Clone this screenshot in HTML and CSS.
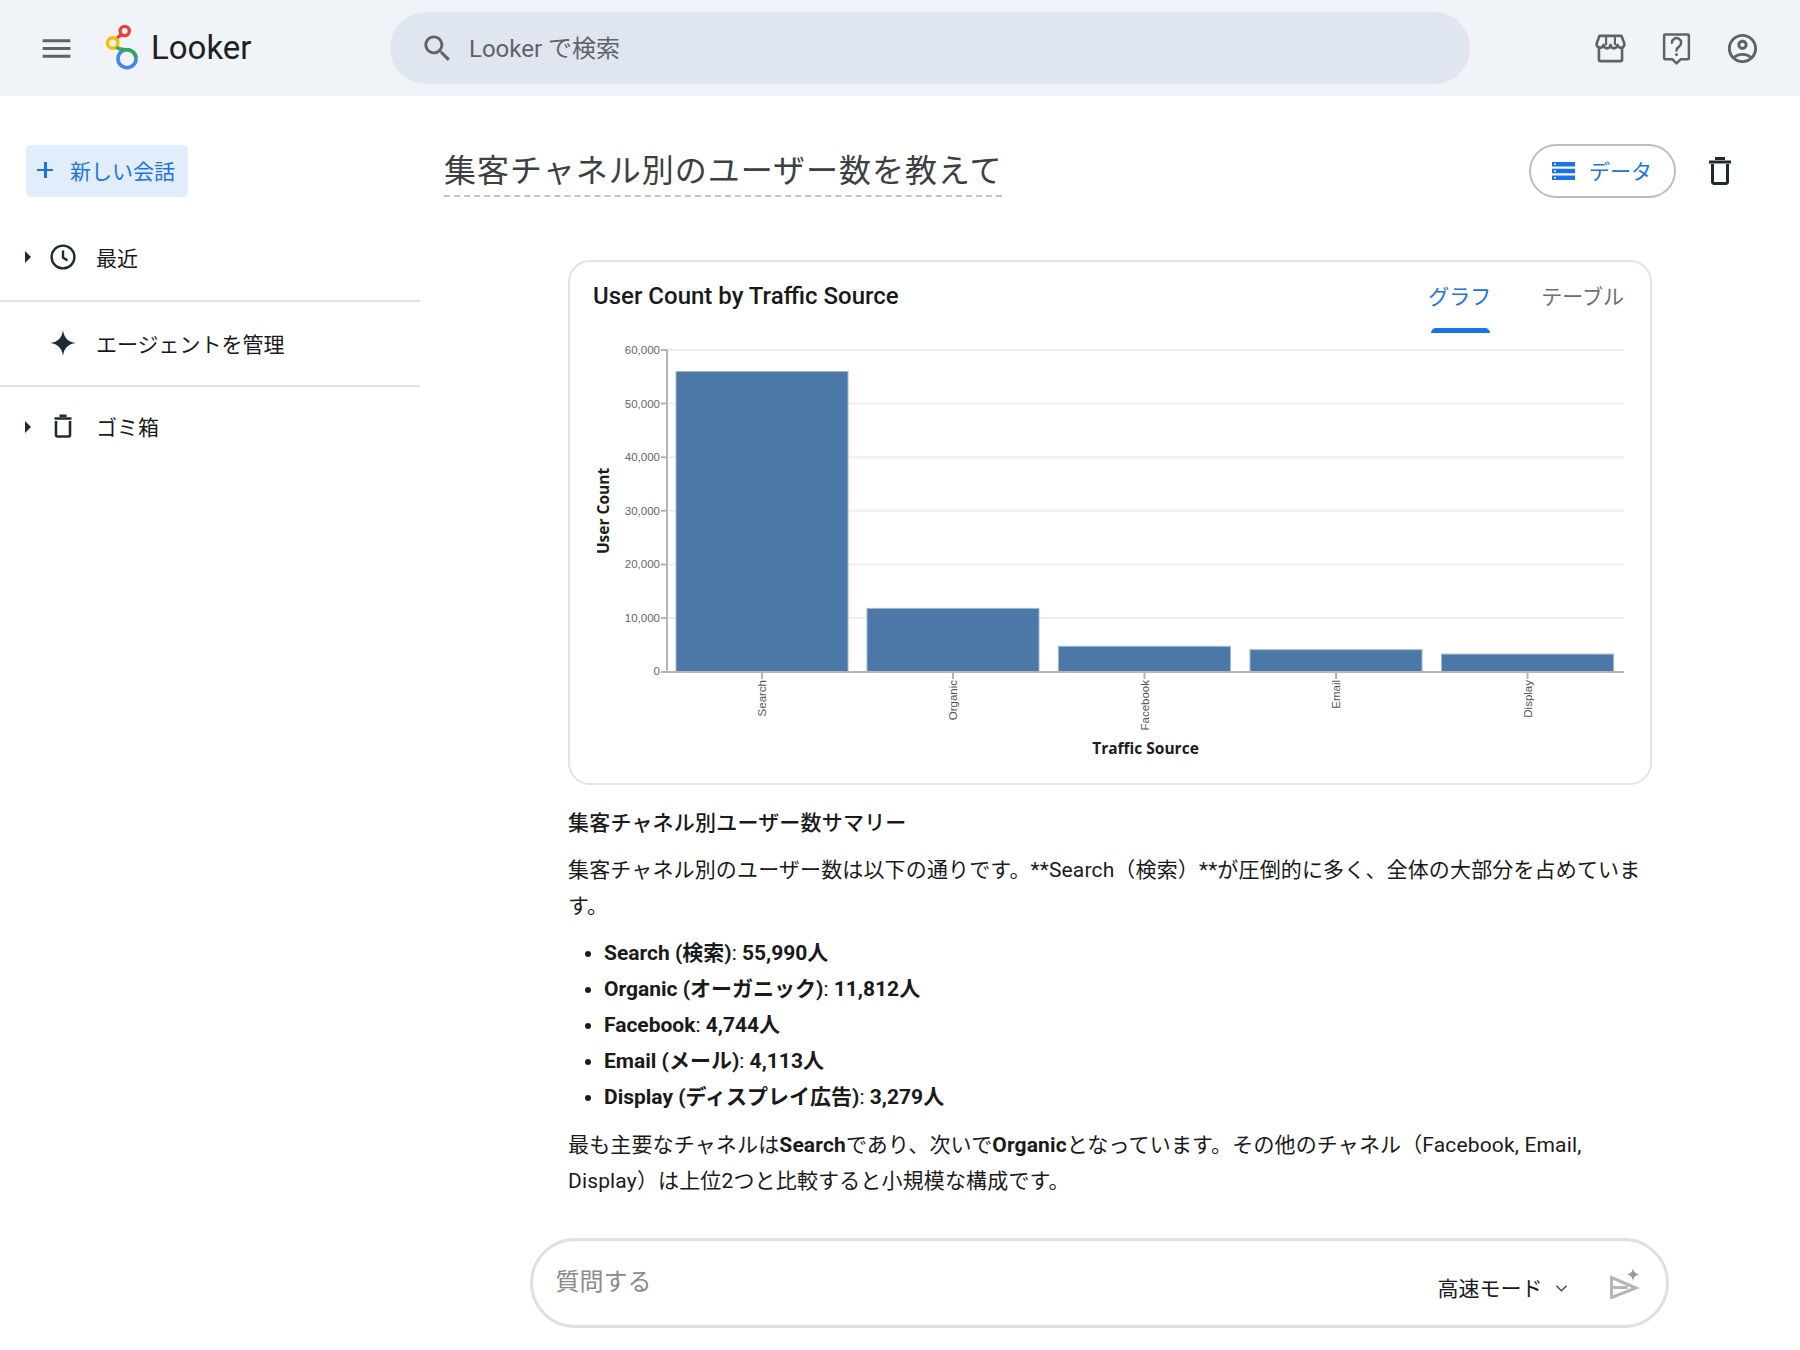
FILE: index.html
```html
<!DOCTYPE html>
<html lang="ja">
<head>
    <title>Looker</title>
    <meta charset="UTF-8">
    <link rel="stylesheet" href="styles.css">
</head>
<body>
    <header class="header">
        <svg class="menu-icon" viewBox="0 0 24 24"><path d="M3 18h18v-2H3v2zm0-5h18v-2H3v2zm0-7v2h18V6H3z"/></svg>
        <div class="logo">
            <svg class="logo-mark" viewBox="0 0 40 52" fill="none">
                <path d="M17.500 12.500 12.500 16.500" stroke="#ea4335" stroke-width="3.400"/>
                <circle cx="20.700" cy="9" r="4.600" stroke="#ea4335" stroke-width="3.400"/>
                <circle cx="8.700" cy="21" r="5.200" stroke="#fbbc04" stroke-width="3.400"/>
                <circle cx="23" cy="36.700" r="9" stroke="#4285f4" stroke-width="3.600"/>
                <path d="M12.500 25 Q15 27.700 23 27.700 A9 9 0 0 1 32 35.500" stroke="#34a853" stroke-width="3.600"/>
            </svg>
            <span class="logo-text">Looker</span>
        </div>
        <div class="search">
            <svg class="search-icon" viewBox="0 0 24 24"><path d="M15.500 14h-.790l-.280-.270C15.410 12.590 16 11.110 16 9.500 16 5.910 13.090 3 9.500 3S3 5.910 3 9.500 5.910 16 9.500 16c1.610 0 3.090-.590 4.230-1.570l.270.280v.790l5 4.990L20.490 19l-4.990-5zm-6 0C7.010 14 5 11.990 5 9.500S7.010 5 9.500 5 14 7.010 14 9.500 11.990 14 9.500 14z"/></svg>
            <span class="search-text">Looker で検索</span>
        </div>
        <div class="header-icons">
            <svg class="head-icon" viewBox="0 0 30 30" fill="none" stroke="#5f6368" stroke-width="2.400" stroke-linejoin="round">
                <path d="M4.500 13v12.500a1 1 0 0 0 1 1h19a1 1 0 0 0 1-1V13"/>
                <path d="M5 3.500h20l2.600 7a3.100 3.100 0 0 1-6.300 1.200 3.100 3.100 0 0 1-6.300 0 3.100 3.100 0 0 1-6.300 0 3.100 3.100 0 0 1-6.300-1.200z"/>
                <path d="M11 4v8M19 4v8" stroke-width="2"/>
            </svg>
            <svg class="head-icon" viewBox="0 0 30 32" fill="none" stroke="#5f6368" stroke-width="2.400" stroke-linejoin="round">
                <path d="M4 2.500h22a1 1 0 0 1 1 1v22a1 1 0 0 1-1 1h-7l-4 4-4-4H4a1 1 0 0 1-1-1v-22a1 1 0 0 1 1-1z"/>
                <path d="M10.500 10.500a4.500 4.500 0 1 1 7 3.700c-1.500 1-2.500 1.800-2.500 3.800" stroke-linecap="round"/>
                <circle cx="15" cy="22" r="1.400" fill="#5f6368" stroke="none"/>
            </svg>
            <svg class="head-icon head-icon-big" viewBox="0 0 24 24" fill="#5f6368">
                <path d="M12 2C6.480 2 2 6.480 2 12s4.480 10 10 10 10-4.480 10-10S17.520 2 12 2zM7.350 18.500C8.660 17.560 10.260 17 12 17s3.340.560 4.650 1.500C15.340 19.440 13.740 20 12 20s-3.340-.560-4.650-1.500zm10.790-1.380C16.450 15.800 14.320 15 12 15s-4.450.800-6.140 2.120C4.700 15.730 4 13.950 4 12c0-4.420 3.580-8 8-8s8 3.580 8 8c0 1.950-.700 3.730-1.860 5.120z"/>
                <path d="M12 6c-1.930 0-3.500 1.570-3.500 3.500S10.070 13 12 13s3.500-1.570 3.500-3.500S13.930 6 12 6zm0 5c-.830 0-1.500-.670-1.500-1.500S11.170 8 12 8s1.500.670 1.500 1.500S12.830 11 12 11z"/>
            </svg>
        </div>
    </header>

    <div class="layout">
        <aside class="sidebar">
            <button class="new-chat"><span class="plus"></span>新しい会話</button>
            <div class="side-item side-first">
                <span class="caret"></span>
                <svg class="side-icon" viewBox="0 0 26 26" fill="none" stroke="#1f2a33" stroke-width="2.400"><circle cx="13" cy="13" r="11.400"/><path d="M13 6.500V13.500l4.500 3"/></svg>
                <span>最近</span>
            </div>
            <div class="side-item">
                <svg class="side-icon" viewBox="0 0 26 26"><path d="M13 0C14 8 18 12 26 13 18 14 14 18 13 26 12 18 8 14 0 13 8 12 12 8 13 0z" fill="#1f2a33"/></svg>
                <span>エージェントを管理</span>
            </div>
            <div class="side-item side-last">
                <span class="caret"></span>
                <svg class="side-icon" viewBox="0 0 26 26" fill="none" stroke="#1f2a33" stroke-width="2.600"><path d="M6 8v14a1.500 1.500 0 0 0 1.500 1.500h11a1.500 1.500 0 0 0 1.500-1.500V8"/><path d="M4.500 5.500h17M9.500 2.800h7"/></svg>
                <span>ゴミ箱</span>
            </div>
        </aside>

        <main class="main">
            <div class="title-row">
                <h1 class="title">集客チャネル別のユーザー数を教えて</h1>
                <button class="data-btn">
                    <svg class="data-icon" viewBox="0 0 23 18"><path d="M0 0h23v4.500H0zM0 6.700h23v4.500H0zM0 13.400h23V18H0z" fill="#1a73e8"/><path d="M2 1.500h2v1.500H2zM2 8.200h2v1.500H2zM2 15h2v1.500H2z" fill="#fff"/></svg>
                    データ
                </button>
                <svg class="title-trash" viewBox="0 0 22 28" fill="none" stroke="#1f2a33" stroke-width="3"><path d="M3.500 7v18a1.500 1.500 0 0 0 1.500 1.500h12a1.500 1.500 0 0 0 1.500-1.500V7"/><path d="M0 5h22M6 1.500h10"/></svg>
            </div>

            <section class="card">
                <div class="card-head">
                    <h2 class="card-title">User Count by Traffic Source</h2>
                    <div class="tabs">
                        <span class="tab tab-active">グラフ</span>
                        <span class="tab">テーブル</span>
                    </div>
                </div>
                <svg class="chart" viewBox="571 336 1078 446" width="1078" height="446">
                    <g class="grid">
                        <path d="M667 350H1624M667 403.600H1624M667 457.200H1624M667 510.800H1624M667 564.400H1624M667 618H1624"/>
                    </g>
                    <g class="bars">
                        <rect x="676" y="371.500" width="172" height="300"/>
                        <rect x="867" y="608.400" width="172" height="63.300"/>
                        <rect x="1058.500" y="646.300" width="172" height="25.400"/>
                        <rect x="1250" y="649.700" width="172" height="22"/>
                        <rect x="1441.500" y="654.100" width="172" height="17.600"/>
                    </g>
                    <path class="axis" d="M667 350V672M661 672H1624M661 350H667M661 403.600H667M661 457.200H667M661 510.800H667M661 564.400H667M661 618H667M762 672V679M953 672V679M1144.500 672V679M1336 672V679M1527.500 672V679"/>
                    <g class="y-labels">
                        <text x="660" y="354">60,000</text>
                        <text x="660" y="408">50,000</text>
                        <text x="660" y="461">40,000</text>
                        <text x="660" y="515">30,000</text>
                        <text x="660" y="568">20,000</text>
                        <text x="660" y="622">10,000</text>
                        <text x="660" y="675">0</text>
                    </g>
                    <g class="x-labels">
                        <text transform="translate(766 680) rotate(-90)">Search</text>
                        <text transform="translate(957 680) rotate(-90)">Organic</text>
                        <text transform="translate(1148.500 680) rotate(-90)">Facebook</text>
                        <text transform="translate(1340 680) rotate(-90)">Email</text>
                        <text transform="translate(1531.500 680) rotate(-90)">Display</text>
                    </g>
                    <text class="axis-title" transform="translate(609 511) rotate(-90)">User Count</text>
                    <text class="axis-title" x="1145.500" y="754">Traffic Source</text>
                </svg>
            </section>

            <article class="summary">
                <h3 class="summary-title">集客チャネル別ユーザー数サマリー</h3>
                <p>集客チャネル別のユーザー数は以下の通りです。**Search（検索）**が圧倒的に多く、全体の大部分を占めています。</p>
                <ul class="summary-list">
                    <li><b>Search (検索)</b>: <b>55,990人</b></li>
                    <li><b>Organic (オーガニック)</b>: <b>11,812人</b></li>
                    <li><b>Facebook</b>: <b>4,744人</b></li>
                    <li><b>Email (メール)</b>: <b>4,113人</b></li>
                    <li><b>Display (ディスプレイ広告)</b>: <b>3,279人</b></li>
                </ul>
                <p>最も主要なチャネルは<b>Search</b>であり、次いで<b>Organic</b>となっています。その他のチャネル（Facebook, Email, Display）は上位2つと比較すると小規模な構成です。</p>
            </article>

            <div class="composer">
                <span class="placeholder">質問する</span>
                <span class="mode">高速モード</span>
                <svg class="chevron" viewBox="0 0 14 9" fill="none" stroke="#444" stroke-width="1.500"><path d="M1.500 1.500 7 7l5.500-5.500"/></svg>
                <svg class="send" viewBox="0 0 32 32" fill="none"><path d="M3.500 10.500 28 21 3.500 30.500zM3.500 20.500h16" stroke="#b5b5b5" stroke-width="3"/><path d="M25 1c.6 4 2.500 6 6.500 6.500-4 .6-5.900 2.500-6.500 6.500-.6-4-2.500-5.900-6.500-6.500 4-.5 5.900-2.500 6.500-6.500z" fill="#9a9a9a"/></svg>
            </div>
        </main>
    </div>
</body>
</html>
```

FILE: styles.css
```css
/* Looker conversation page */
* {
    box-sizing: border-box;
}

body {
    margin: 0;
    height: 1350px;
    overflow: hidden;
    background-color: #fff;
    color: #1a1a1a;
    font-family: Roboto, "Noto Sans CJK JP", sans-serif;
    font-size: 21px;
}

button {
    font-family: inherit;
}

/* top bar */
.header {
    height: 96px;
    background-color: #f0f4f9;
    display: flex;
    align-items: center;
}

.menu-icon {
    width: 37px;
    height: 37px;
    margin-left: 38px;
    fill: #5f6368;
}

.logo {
    display: flex;
    align-items: center;
    margin-left: 29px;
    width: 286px;
}

.logo-mark {
    width: 40px;
    height: 52px;
}

.logo-text {
    margin-left: 7px;
    margin-top: -2px;
    font-size: 33px;
    color: #1f1f1f;
}

.search {
    width: 1080px;
    height: 72px;
    border-radius: 36px;
    background-color: #dfe6f0;
    display: flex;
    align-items: center;
    padding-left: 30px;
    color: #5f6368;
    font-size: 24px;
}

.search-icon {
    width: 35px;
    height: 35px;
    margin-right: 14px;
    fill: #5f6368;
}

.search-text {
    margin-top: -3px;
}

.header-icons {
    display: flex;
    align-items: center;
    gap: 33px;
    margin-left: 124px;
}

.head-icon {
    width: 33px;
    height: 33px;
}

.head-icon-big {
    width: 35px;
    height: 35px;
    margin-left: -1px;
}

/* page body */
.layout {
    display: flex;
}

.sidebar {
    width: 420px;
    padding-top: 49px;
}

.new-chat {
    display: flex;
    align-items: center;
    width: 162px;
    height: 52px;
    margin-left: 26px;
    padding: 0 0 3px 11px;
    border: 0;
    border-radius: 5px;
    background-color: #e2edfc;
    color: #1a73e8;
    font-size: 21px;
}

.plus {
    position: relative;
    width: 33px;
    height: 16px;
}

.plus::before,
.plus::after {
    content: "";
    position: absolute;
    background-color: #1a73e8;
}

.plus::before {
    left: 0;
    top: 7px;
    width: 16px;
    height: 2.500px;
}

.plus::after {
    left: 7px;
    top: 0;
    width: 2.500px;
    height: 16px;
}

.side-item {
    position: relative;
    height: 85px;
    display: flex;
    align-items: center;
    padding: 0 0 2px 50px;
    border-bottom: 2px solid #e3e3e3;
}

.side-first {
    height: 89px;
    margin-top: 16px;
    padding-bottom: 0;
}

.side-last {
    height: 80px;
    border-bottom: 0;
}

.caret {
    position: absolute;
    left: 25px;
    top: 50%;
    margin-top: -6px;
    border-left: 6px solid #1f2a33;
    border-top: 6px solid transparent;
    border-bottom: 6px solid transparent;
}

.side-icon {
    width: 26px;
    height: 26px;
    margin-right: 20px;
}

.main {
    width: 1380px;
    padding-top: 48px;
    display: flex;
    flex-direction: column;
    align-items: center;
}

.title-row {
    width: 100%;
    display: flex;
    align-items: center;
    padding-left: 24px;
}

.title {
    margin: 0;
    height: 52px;
    line-height: 53px;
    font-size: 32px;
    font-weight: 400;
    letter-spacing: 1px;
    color: #3c4043;
    border-bottom: 2px dashed #c4c4c4;
}

.data-btn {
    display: flex;
    align-items: center;
    gap: 14px;
    width: 147px;
    height: 54px;
    margin-left: auto;
    padding: 0 0 2px 21px;
    border: 2px solid #bdbdbd;
    border-radius: 27px;
    background-color: #fff;
    color: #1a73e8;
    font-size: 21px;
}

.data-icon {
    width: 23px;
    height: 18px;
    margin-top: 2px;
}

.title-trash {
    width: 22px;
    height: 28px;
    margin: 0 69px 0 33px;
}

.card {
    width: 1084px;
    height: 525px;
    margin-top: 62px;
    border: 2px solid #e3e3e3;
    border-radius: 22px;
}

.card-head {
    height: 74px;
    display: flex;
    justify-content: space-between;
    padding: 0 26px 0 23px;
}

.card-title {
    margin: 0;
    padding-top: 18px;
    font-size: 24px;
    line-height: 32px;
    font-weight: 500;
    color: #1a1a1a;
}

.tabs {
    display: flex;
    gap: 50px;
}

.tab {
    padding-top: 18px;
    color: #6f6f6f;
    font-size: 21px;
}

.tab-active {
    position: relative;
    color: #1a73e8;
}

.tab-active::after {
    content: "";
    position: absolute;
    left: 3px;
    right: 1px;
    bottom: 3px;
    height: 5px;
    border-radius: 5px 5px 0 0;
    background-color: #1a73e8;
}

.chart {
    display: block;
    margin-left: 1px;
}

.grid path {
    stroke: #eeeeee;
    stroke-width: 2;
    fill: none;
}

.bars rect {
    fill: #4c78a8;
    stroke: #9db8d3;
    stroke-width: 1;
}

.axis {
    stroke: #b5b5b5;
    stroke-width: 2;
    fill: none;
}

.y-labels text {
    font-family: "Liberation Sans", sans-serif;
    font-size: 11.500px;
    fill: #666;
    text-anchor: end;
}

.x-labels text {
    font-family: "Liberation Sans", sans-serif;
    font-size: 11.500px;
    fill: #555;
    text-anchor: end;
}

.axis-title {
    font-family: "Open Sans", sans-serif;
    font-size: 15.500px;
    font-weight: 700;
    fill: #1c1c1c;
    text-anchor: middle;
}

/* answer text */
.summary {
    width: 1084px;
    margin-top: 20px;
    line-height: 36px;
}

.summary-title {
    margin: 0;
    font-size: 21px;
    font-weight: 500;
    line-height: 36px;
    letter-spacing: 0.200px;
}

.summary p {
    margin: 11px 0 0;
    letter-spacing: 0.150px;
}

.summary-list {
    margin: 11px 0 0 0;
    padding-left: 36px;
}

.summary-list + p {
    margin-top: 12px;
}

.summary b {
    font-weight: 700;
}

.composer {
    width: 1139px;
    height: 90px;
    margin: 39px 0 0 -22px;
    border: 3px solid #e0e0e0;
    border-radius: 45px;
    display: flex;
    align-items: center;
    padding: 0 26px 0 23px;
}

.placeholder {
    font-size: 24px;
    color: #8a8a8a;
    margin-top: -8px;
}

.mode {
    margin-left: auto;
    margin-top: 8px;
}

.chevron {
    width: 13px;
    height: 9px;
    margin: 10px 0 0 12px;
}

.send {
    width: 32px;
    height: 32px;
    margin-left: 40px;
}
```
